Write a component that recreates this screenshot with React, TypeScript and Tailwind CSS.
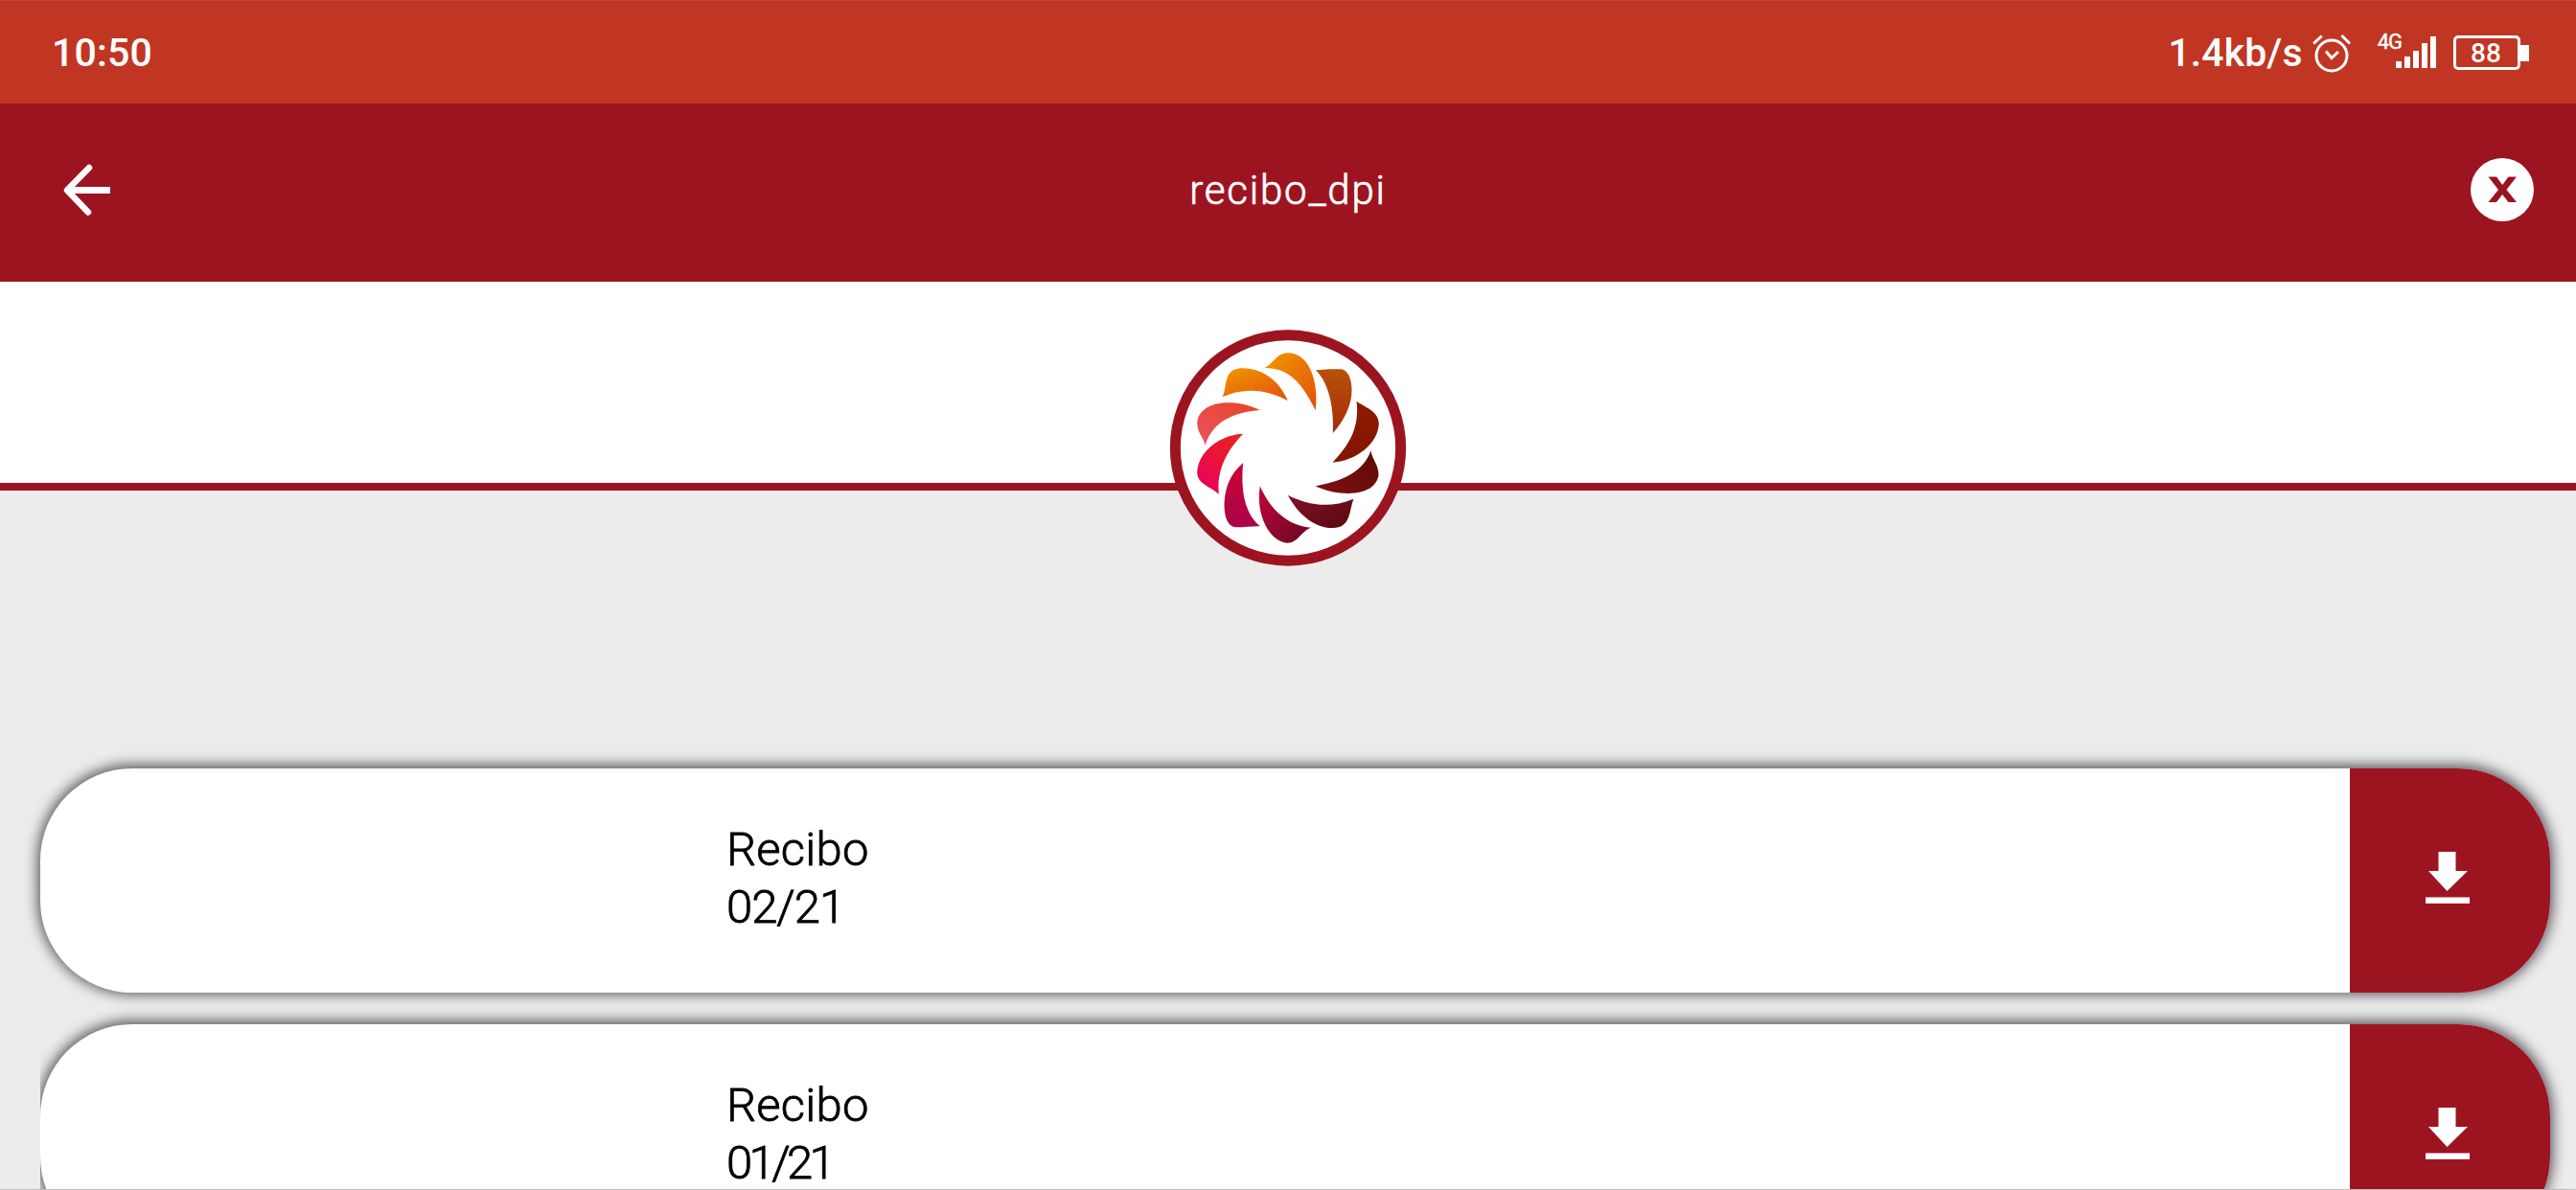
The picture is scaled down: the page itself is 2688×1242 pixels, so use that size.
const petals = [
  { d: 'M359 160 C385 150 395 114 432 113 C495 113 530 195 519 293 C475 205 435 160 359 160Z', a: '#ee9a00', b: '#e4500a' },
  { d: 'M519 167 C550 164 575 163 598 164 C618 166 631 190 632 225 C634 275 608 325 573 364 C577 285 560 205 519 167Z', a: '#b5530a', b: '#a82a08' },
  { d: 'M647 264 C672 283 716 294 717 334 C715 395 650 450 572 456 C620 405 658 350 647 264Z', a: '#8a1a00', b: '#851503' },
  { d: 'M692 419 C695 445 716 463 716 494 C710 560 600 568 518 530 C585 518 665 495 692 419Z', a: '#5e0a05', b: '#7d1110' },
  { d: 'M638 570 C625 600 630 655 582 660 C530 667 470 630 432 558 C490 588 560 602 638 570Z', a: '#850f2b', b: '#560a0c' },
  { d: 'M505 660 C475 668 465 708 430 708 C375 705 330 620 345 530 C375 600 430 655 505 660Z', a: '#c1063c', b: '#640820' },
  { d: 'M345 656 C320 655 300 659 270 659 C240 655 233 620 233 585 C235 530 255 490 292 457 C284 540 295 615 345 656Z', a: '#cc0436', b: '#a90548' },
  { d: 'M216 556 C195 533 148 525 148 487 C150 425 215 370 292 366 C245 415 208 475 216 556Z', a: '#e9241a', b: '#e90060' },
  { d: 'M173 402 C168 375 148 365 148 330 C155 265 260 250 345 292 C260 300 200 325 173 402Z', a: '#e74322', b: '#ea5058' },
  { d: 'M227 251 C242 225 230 170 275 162 C330 154 400 185 432 263 C375 230 300 217 227 251Z', a: '#ef9200', b: '#e6500c' },
];

const gradientEnds = [
  [0, 0, 1, 1],
  [0.4, 0, 0.4, 1],
  [0.5, 0, 0.5, 1],
  [1, 0, 0, 1],
  [0, 0, 1, 1],
  [0, 0, 1, 1],
  [0.5, 0, 0.5, 1],
  [0.8, 0, 0.2, 1],
  [1, 0, 0, 0.7],
  [0.2, 0, 0.9, 1],
];

function Logo() {
  return (
    <svg className="absolute top-[50px] left-1/2 h-[247px] w-[247px] -translate-x-1/2" viewBox="62 40 741 741">
      <defs>
        {petals.map((p, i) => {
          const [x1, y1, x2, y2] = gradientEnds[i];
          return (
            <linearGradient key={i} id={`petal-${i}`} x1={x1} y1={y1} x2={x2} y2={y2}>
              <stop offset="0" stopColor={p.a} />
              <stop offset="1" stopColor={p.b} />
            </linearGradient>
          );
        })}
      </defs>
      <circle cx="432.5" cy="410.5" r="353" fill="#fff" stroke="#9d1421" strokeWidth="33" />
      {petals.map((p, i) => (
        <path key={i} d={p.d} fill={`url(#petal-${i})`} />
      ))}
    </svg>
  );
}

function StatusBar() {
  return (
    <div className="flex h-[108px] items-start justify-between border-t border-[#bd4a3a] bg-[#c03623] pr-[49px] pl-[54px] font-['Roboto',sans-serif] font-medium text-white">
      <span className="mt-[29px] text-[41px] leading-[50px] tracking-[0.2px]">10:50</span>
      <div className="flex items-start">
        <span className="mt-[29px] text-[41px] leading-[50px] tracking-[0.1px]">1.4kb/s</span>
        <svg className="mt-[34px] ml-[10px] h-[42px] w-[40px]" viewBox="0 0 40 42" fill="none" stroke="#fff" strokeWidth="3">
          <circle cx="20" cy="23" r="16" />
          <path d="M14 18.5l6 7 7-6.5M1.200 10.500l8.500-8M30.500 2l8.500 8.500" />
        </svg>
        <span className="mt-[30px] ml-[28px] text-[22px] leading-[26px] font-normal tracking-[-1px] [-webkit-text-stroke:0.4px_#fff]">4G</span>
        <div className="mt-[37px] -ml-[6px] flex h-[33px] items-end gap-[3px]">
          <i className="h-[7px] w-[6px] bg-white" />
          <i className="h-[12px] w-[6px] bg-white" />
          <i className="h-[18px] w-[6px] bg-white" />
          <i className="h-[26px] w-[6px] bg-white" />
          <i className="h-[33px] w-[6px] bg-white" />
        </div>
        <div className="mt-[36px] ml-[18px] flex items-center">
          <div className="flex h-[36px] w-[70px] items-center justify-center rounded-[5px] border-[3px] border-white pt-[2px] pr-[2px] text-[28px] leading-none">88</div>
          <i className="h-[17px] w-[9px] bg-white" />
        </div>
      </div>
    </div>
  );
}

function Header() {
  return (
    <header className="grid h-[185.500px] grid-cols-[1fr_auto_1fr] items-center bg-[#9d1421] pr-[44px] pl-[44px]">
      <svg className="mt-[-6px] ml-[22px] h-[54px] w-[50px]" viewBox="0 0 50 54" fill="none" stroke="#fff">
        <path d="M27 4L4 27.500L26 50.500" strokeWidth="6.500" strokeLinecap="round" strokeLinejoin="round" />
        <path d="M5 27.500H49" strokeWidth="6.800" />
      </svg>
      <h1 className="mt-[-4px] font-['Roboto',sans-serif] text-[42px] leading-[50px] font-light tracking-[1.8px] text-white [-webkit-text-stroke:0.7px_#fff]">recibo_dpi</h1>
      <svg className="mt-[-6px] h-[66px] w-[66px] justify-self-end" viewBox="0 0 66 66">
        <circle cx="33" cy="33" r="33" fill="#fff" />
        <path d="M18.500 19.500h8.500l6.200 8.500 6.300-8.500H48L37.500 33 48 46h-8.500l-6.300-8-6.200 8h-8.500L29 33z" fill="#9d1421" />
      </svg>
    </header>
  );
}

function ReceiptCard({ period, periodClass, className }: { period: string; periodClass: string; className: string }) {
  return (
    <article className={className}>
      <div className="flex h-[234px] overflow-hidden rounded-[96px] bg-white shadow-[0_-1px_14px_3px_#5c5861]">
        <div className="flex-1 pt-[55px] pl-[716px] font-['Roboto',sans-serif] text-[49px] leading-[60px] font-light text-black [-webkit-text-stroke:0.8px_#000]">
          <p className="tracking-[0.2px]">Recibo</p>
          <p className={periodClass}>{period}</p>
        </div>
        <button className="flex w-[209px] justify-center bg-[#9d1421] pt-[87px] pr-[5px]">
          <svg className="h-[55px] w-[46px]" viewBox="0 0 46 55" fill="#fff">
            <path d="M13.500 0h18v20H44L22.500 41 3 20h10.500zM0 47.500h46V54H0z" />
          </svg>
        </button>
      </div>
    </article>
  );
}

export default function App() {
  return (
    <div className="h-[1242px] w-[2688px] overflow-hidden border-b border-[#bcbcbc] bg-[#ececec]">
      <StatusBar />
      <Header />
      <section className="relative h-[218px] border-b-[8px] border-[#9d1421] bg-white">
        <Logo />
      </section>
      <main className="flex flex-col gap-[33.400px] pt-[290px] pr-[27px] pl-[42px]">
        <ReceiptCard period="02/21" periodClass="tracking-[-1px]" className="" />
        <ReceiptCard period="01/21" periodClass="tracking-[-3.6px]" className="[clip-path:inset(-30px_-30px_-30px_0px)]" />
      </main>
    </div>
  );
}
